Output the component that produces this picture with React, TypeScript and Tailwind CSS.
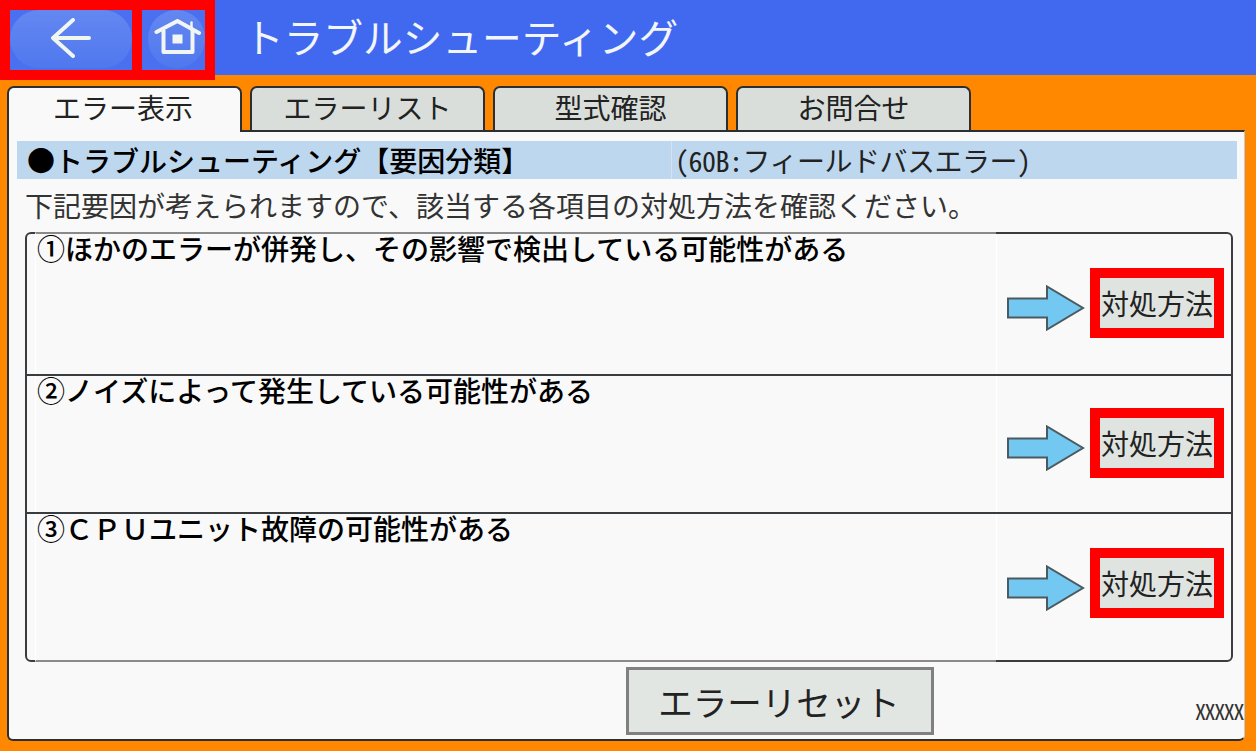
const FONT = "font-['Noto_Sans_CJK_JP','Noto_Sans',sans-serif]";

function Tab({ label, active }: { label: string; active?: boolean }) {
  return (
    <div
      className={
        active
          ? "relative z-10 -mb-[2px] flex h-[46px] w-[235px] items-start justify-center rounded-t-[7px] border-2 border-b-0 border-[#2b2f33] bg-[#f9f9f9] pr-[3px] text-[28px] leading-[38px] text-[#222]"
          : "flex h-[44px] w-[235px] items-start justify-center rounded-t-[7px] border-2 border-b-0 border-[#2b2f33] bg-[#d9dedb] text-[28px] leading-[38px] text-[#222]"
      }
    >
      {label}
    </div>
  );
}

function Arrow() {
  return (
    <svg width="78" height="46" viewBox="0 0 78 46" className="mt-[17px] shrink-0">
      <path
        d="M1 13.5H40V1.5L76 23L40 44.5V32.5H1Z"
        fill="#72c8f0"
        stroke="#4b5a60"
        strokeWidth="2"
      />
    </svg>
  );
}

function Row({ text, h, top, first, last }: { text: string; h: string; top: string; first?: boolean; last?: boolean }) {
  return (
    <div className={`flex ${h} ${last ? "" : "-mr-[2px] border-b-2 border-[#3a3d40]"}`}>
      <div
        className={`ml-[8px] w-[961px] border-l border-white pl-[1px] text-[28px] font-medium leading-[28px] whitespace-nowrap text-[#000] ${first ? "-mt-[2px] border-t-2 border-t-[#8a8a8a]" : ""} ${last ? "-mb-[2px] border-b-2 border-b-[#8a8a8a]" : ""}`}
      >
        {text}
      </div>
      <div className={`flex flex-1 items-start border-l border-white pl-[10px] ${top}`}>
        <Arrow />
        <div className="ml-[5px] flex h-[70px] w-[134px] items-center justify-center border-[10px] border-[#ff0000] bg-[#e0e4e0] text-[28px] leading-none whitespace-nowrap text-[#222]">
          対処方法
        </div>
      </div>
    </div>
  );
}

export default function App() {
  return (
    <div className={`flex h-[751px] w-[1256px] flex-col overflow-hidden bg-[#ff8800] ${FONT}`}>
      <header className="flex h-[75px] shrink-0 items-start bg-[#4169f0]">
        <div className="relative z-20 flex h-[80px] w-[215px] shrink-0 gap-[10px] bg-[#ff0000] p-[10px]">
          <div className="h-[60px] w-[122px] bg-[#4a70f0]">
            <div className="flex h-[58px] w-[122px] items-center justify-center rounded-[29px] bg-linear-to-b from-[#6487f1] to-[#5078ee]">
              <svg width="44" height="40" viewBox="0 0 44 40" className="mb-[3px]">
                <path d="M24 2L4 20L24 38M5 20H40" fill="none" stroke="#f0f6f0" strokeWidth="4" strokeLinecap="round" strokeLinejoin="round" />
              </svg>
            </div>
          </div>
          <div className="h-[60px] w-[63px] bg-[#4a70f0] pl-[6px]">
            <div className="flex h-[58px] w-[57px] items-center justify-center rounded-full bg-linear-to-b from-[#6487f1] to-[#5078ee]">
              <svg width="48" height="36" viewBox="0 0 48 36" className="mb-[4px]">
                <path d="M3.5 13L24.5 2L46 14" fill="none" stroke="#f2f6f2" strokeWidth="4" strokeLinecap="round" strokeLinejoin="round" />
                <path d="M38.5 3.5V10" fill="none" stroke="#f2f6f2" strokeWidth="2.5" strokeLinecap="round" />
                <path d="M10.5 11V33H39.5V11" fill="none" stroke="#f2f6f2" strokeWidth="4" strokeLinejoin="round" />
                <rect x="19.5" y="15.5" width="10" height="9" fill="#f2f6f2" />
              </svg>
            </div>
          </div>
        </div>
        <div className="ml-[29px] text-[39.7px] leading-[71px] whitespace-nowrap text-[#f2f5fa]">
          トラブルシューティング
        </div>
      </header>

      <div className="ml-[7px] mt-[11px] flex items-start gap-[8px]">
        <Tab label="エラー表示" active />
        <Tab label="エラーリスト" />
        <Tab label="型式確認" />
        <Tab label="お問合せ" />
      </div>

      <main className="mb-[10px] ml-[7px] mr-[11px] flex flex-1 flex-col rounded-b-[6px] border-2 border-r border-[#2b2f33] border-r-[#c8c8c8] bg-[#f9f9f9] pl-[8px] pr-[7px] pt-[9px]">
        <div className="flex h-[38px] shrink-0 items-center bg-[#bdd7ee] pl-[10px] text-[28px] font-medium leading-none text-[#000]">
          <span className="w-[644px] whitespace-nowrap">●トラブルシューティング【要因分類】</span>
          <span className="flex h-full flex-1 items-center border-l border-[#d3e3f2] pl-[3px] font-normal tracking-[-0.5px] whitespace-nowrap text-[#222] [font-feature-settings:'hwid']">(60B:フィールドバスエラー)</span>
        </div>
        <div className="mt-[6px] h-[47px] pl-[8px] text-[28px] leading-[40px] whitespace-nowrap text-[#333]">
          下記要因が考えられますので、該当する各項目の対処方法を確認ください。
        </div>
        <div className="ml-[8px] mr-[4px] flex h-[430px] flex-col rounded-[6px] border-2 border-[#3a3d40] bg-[#f9f9f9]">
          <Row first h="h-[142px]" top="pt-[34px]" text="①ほかのエラーが併発し、その影響で検出している可能性がある" />
          <Row h="h-[138px]" top="pt-[32px]" text="②ノイズによって発生している可能性がある" />
          <Row last h="flex-1" top="pt-[34px]" text={"③\uFF23\uFF30\uFF35ユニット故障の可能性がある"} />
        </div>
        <div className="relative flex flex-1 items-start pt-[5px]">
          <button className="ml-[609px] flex h-[68px] w-[308px] items-center justify-center border-[3px] border-[#808080] bg-[#e2e6e2] pr-[2px] text-[34.5px] leading-none text-[#222]">
            エラーリセット
          </button>
          <span className="absolute right-[-6px] bottom-[18px] text-[22px] leading-[22px] tracking-[-1.4px] text-[#333] [font-feature-settings:'hwid']">
            XXXXX
          </span>
        </div>
      </main>
    </div>
  );
}
